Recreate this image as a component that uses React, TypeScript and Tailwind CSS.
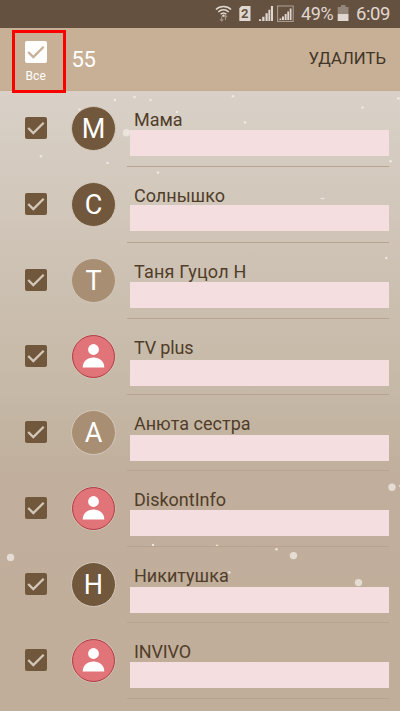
import clsx from "clsx"

interface Contact {
  name: string
  letter?: string
  light?: boolean
  barClass: string
  nameClass?: string
}

const contacts: Contact[] = [
  { name: "Мама", letter: "М", barClass: "top-[39px] h-[26px]" },
  { name: "Солнышко", letter: "С", barClass: "top-[38px] h-[26px]" },
  { name: "Таня Гуцол Н", letter: "Т", light: true, barClass: "top-[39px] h-[25.5px]", nameClass: "tracking-[0.2px]" },
  { name: "TV plus", barClass: "top-[41px] h-[26px]", nameClass: "tracking-[-0.15px]" },
  { name: "Анюта сестра", letter: "А", light: true, barClass: "top-[39.5px] h-[26px]" },
  { name: "DiskontInfo", barClass: "top-[39px] h-[26px]" },
  { name: "Никитушка", letter: "Н", barClass: "top-[40px] h-[25.5px]" },
  { name: "INVIVO", barClass: "top-[39px] h-[26px]", nameClass: "tracking-[-0.15px]" },
]

// x, y, radius
const snow: [number, number, number][] = [
  [79.5, 109.5, 1.2], [115, 100, 1.3], [134.5, 97, 1.3], [150.5, 100, 1.3],
  [177, 112, 1.2], [126.5, 132.7, 3.7], [41, 156.3, 1.3], [107.5, 163, 1.3],
  [158, 172.6, 1.3], [233, 96.3, 1.3], [362.5, 107.5, 1.3], [398.3, 98.3, 1.4],
  [245, 122.4, 1.3], [390.5, 161.3, 1.3], [386.3, 258, 1.2], [392, 487.3, 3.7],
  [400, 486, 1], [10.5, 557.4, 3.7], [293.5, 555.6, 3.7], [358.5, 582.6, 3.7],
  [153, 545, 1.2], [217, 545.8, 1.2], [276.5, 549.2, 1.3], [229.3, 572.5, 1.2],
]

function Snow() {
  return (
    <svg className="absolute inset-0" width="400" height="711" viewBox="0 0 400 711">
      {snow.map(([x, y, r], i) => (
        <circle key={i} cx={x} cy={y} r={r} fill="#f0ebe6" fillOpacity={r > 2 ? 0.75 : 0.9} />
      ))}
      <ellipse cx="322.5" cy="198.5" rx="2.4" ry="0.8" fill="#f0ebe6" fillOpacity="0.8" />
    </svg>
  )
}

function CheckBox({ box, tick }: { box: string; tick: string }) {
  return (
    <svg className="block shrink-0" width="22" height="22" viewBox="0 0 22 22">
      <rect width="22" height="22" rx="2" fill={box} />
      <path d="M3.2 11 8.3 16.1 18.7 5.7" fill="none" stroke={tick} strokeWidth="2.3" />
    </svg>
  )
}

function Avatar({ letter, light }: { letter?: string; light?: boolean }) {
  if (!letter) {
    return (
      <svg className="block h-[45px] w-[45px]" viewBox="0 0 45 45">
        <circle cx="22.5" cy="22.5" r="22.1" fill="#d6c8bb" />
        <circle cx="22.5" cy="22.5" r="21" fill="#e07478" stroke="#a92e37" strokeWidth="0.9" />
        <circle cx="22.5" cy="15.5" r="5.4" fill="#fff" />
        <path d="M11.7 33.4C11.7 27.5 16.5 23.6 22.5 23.6S33.3 27.5 33.3 33.4Z" fill="#fff" />
      </svg>
    )
  }
  return (
    <div
      className={clsx(
        "flex h-[45px] w-[45px] items-center justify-center rounded-full border border-[#d3c7ba] text-[27px] leading-none text-white",
        light ? "bg-[#a88e72]" : "bg-[#71573b]"
      )}
    >
      <span className="relative top-[1.5px]">{letter}</span>
    </div>
  )
}

function StatusBar() {
  return (
    <div className="relative flex h-7 bg-[#655140] text-[#e0d8d0]">
      <svg className="block" width="400" height="28" viewBox="0 0 400 28">
        <g fill="none" stroke="#e0d8d0" strokeWidth="1.5">
          <path d="M216 9.5C220 5.4 227 5.4 231 9.5" />
          <path d="M218.3 12C221.3 9 225.7 9 228.7 12" />
          <path d="M220.6 14.3C222.4 12.6 224.6 12.6 226.4 14.3" />
        </g>
        <circle cx="223.5" cy="15.7" r="1.3" fill="#e0d8d0" />
        <path d="M221.7 16.5V21M225.5 15.5V20M220 19.3 221.7 21 223.3 19.3M223.9 17 225.5 15.4 227 17" fill="none" stroke="#a29485" strokeWidth="1.1" />
        <path d="M241.5 6H250.5V21H239.3V8.3Z" fill="#e0d8d0" />
        <path d="M259 21V19.2H261.2V21ZM262.2 21V16.7H264.5V21ZM265.5 21V13.2H267.7V21ZM268.4 21V9.7H270.2V21ZM270.9 21V6H273V21Z" fill="#e0d8d0" />
        <rect x="277.6" y="6" width="15.6" height="15.4" fill="none" stroke="#a99c8e" strokeWidth="1.1" />
        <path d="M279.5 20V18.6H281.3V20ZM282 20V16.5H284V20ZM284.7 20V14H286.6V20ZM287.3 20V11.4H289V20ZM289.7 20V8.4H291.5V20Z" fill="#e0d8d0" />
        <path d="M341 5H345.5V7H348.5V14H337.7V7H341Z" fill="#94867a" />
        <path d="M337.7 14H348.5V21H337.7Z" fill="#e0d8d0" />
      </svg>
      <span className="absolute left-[241px] top-[7px] text-[13px] font-bold leading-[14px] text-[#655140]">2</span>
      <span className="absolute left-[301px] top-1 text-[18px] leading-5 tracking-[-0.4px]">49%</span>
      <span className="absolute left-[356px] top-1 text-[18.5px] leading-5 tracking-[-0.4px]">6:09</span>
    </div>
  )
}

export default function App() {
  return (
    <div className="relative h-[711px] w-[400px] overflow-hidden bg-[linear-gradient(180deg,#d9d1c8_91px,#d3c9bd_180px,#cbbfb0_300px,#c5b8a6_395px,#c1ae9c_480px,#c0ae9a_711px)] font-['Roboto',sans-serif]">
      <Snow />
      <StatusBar />
      <header className="relative flex h-[63px] justify-between border-b border-[#c5ab90] bg-[#c8b096]">
        <div className="flex text-white">
          <div className="ml-3 mt-[2px] flex h-[63px] w-[54px] flex-col items-start border-[3px] border-[#fa0000] pt-[8px] pl-[9.5px]">
            <CheckBox box="#ffffff" tick="#c8b096" />
            <span className="ml-px mt-[6px] text-[12px] leading-[14px] tracking-[0.1px]">Все</span>
          </div>
          <span className="ml-[5.5px] mt-[20px] text-[22px] leading-6 tracking-[-0.3px]">55</span>
        </div>
        <span className="mr-[14px] mt-[21px] text-[16.7px] leading-5 text-[#423526]">УДАЛИТЬ</span>
      </header>
      <main className="relative">
        {contacts.map((contact) => (
          <div key={contact.name} className="flex h-[76px]">
            <div className="ml-[25px] mt-[26px]">
              <CheckBox box="#71573b" tick="#d3c7ba" />
            </div>
            <div className="ml-6 mt-[14.5px]">
              <Avatar letter={contact.letter} light={contact.light} />
            </div>
            <div className="relative ml-[11px] w-[262px] border-b border-[#b7a38f] pl-[7px] pt-[17px]">
              <span className={clsx("block whitespace-nowrap text-[18px] leading-6 text-[#503d29]", contact.nameClass)}>
                {contact.name}
              </span>
              <div className={clsx("absolute left-[3px] right-0 bg-[#f4dedf]", contact.barClass)} />
            </div>
          </div>
        ))}
      </main>
    </div>
  )
}
